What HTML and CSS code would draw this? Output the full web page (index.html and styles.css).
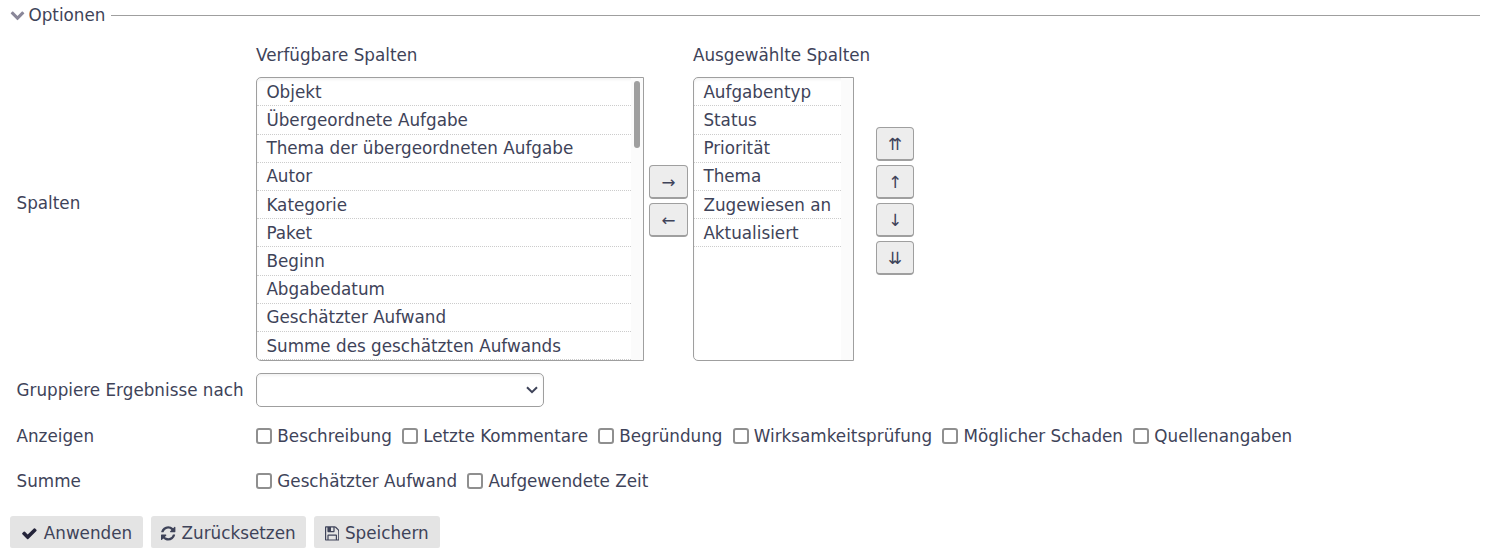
FILE: index.html
```html
<!DOCTYPE html>
<html lang="de">
<head>
<meta charset="utf-8">
<title>Optionen</title>
<link rel="stylesheet" href="styles.css">
</head>
<body>
<section class="options">
  <div class="legend">
    <svg class="chevron" viewBox="0 0 1792 1792"><path d="M1683 808l-742 741q-19 19-45 19t-45-19l-742-741q-19-19-19-45.500t19-45.500l166-165q19-19 45-19t45 19l531 531 531-531q19-19 45-19t45 19l166 165q19 19 19 45.500t-19 45.500z"/></svg>
    <span>Optionen</span>
    <span class="rule"></span>
  </div>
  <div class="row columns">
    <div class="label">Spalten</div>
    <div class="picker">
      <div class="available">
        <div class="caption">Verfügbare Spalten</div>
        <div class="list">
          <ul class="items">
            <li>Objekt</li><li>Übergeordnete Aufgabe</li><li>Thema der übergeordneten Aufgabe</li><li>Autor</li><li>Kategorie</li><li>Paket</li><li>Beginn</li><li>Abgabedatum</li><li>Geschätzter Aufwand</li><li>Summe des geschätzten Aufwands</li>
          </ul>
          <div class="track"><div class="thumb"></div></div>
        </div>
      </div>
      <div class="moves horizontal">
        <button type="button">→</button>
        <button type="button">←</button>
      </div>
      <div class="selected">
        <div class="caption">Ausgewählte Spalten</div>
        <div class="list">
          <ul class="items">
            <li>Aufgabentyp</li><li>Status</li><li>Priorität</li><li>Thema</li><li>Zugewiesen an</li><li>Aktualisiert</li>
          </ul>
          <div class="track"></div>
        </div>
      </div>
      <div class="moves vertical">
        <button type="button">⇈</button>
        <button type="button">↑</button>
        <button type="button">↓</button>
        <button type="button">⇊</button>
      </div>
    </div>
  </div>
  <div class="row group">
    <div class="label">Gruppiere Ergebnisse nach</div>
    <div class="select"><svg class="caret" viewBox="0 0 12 8"><path d="M1 1.200l5 5 5-5"/></svg></div>
  </div>
  <div class="row show">
    <div class="label">Anzeigen</div>
    <div class="checks">
      <label><input type="checkbox">Beschreibung</label>
      <label><input type="checkbox">Letzte Kommentare</label>
      <label><input type="checkbox">Begründung</label>
      <label><input type="checkbox">Wirksamkeitsprüfung</label>
      <label><input type="checkbox">Möglicher Schaden</label>
      <label><input type="checkbox">Quellenangaben</label>
    </div>
  </div>
  <div class="row totals">
    <div class="label">Summe</div>
    <div class="checks">
      <label><input type="checkbox">Geschätzter Aufwand</label>
      <label><input type="checkbox">Aufgewendete Zeit</label>
    </div>
  </div>
</section>
<div class="actions">
  <a class="action"><svg class="icon wide" viewBox="0 0 1792 1792"><path d="M1671 566q0 40-28 68l-724 724-136 136q-28 28-68 28t-68-28l-136-136-362-362q-28-28-28-68t28-68l136-136q28-28 68-28t68 28l294 295 656-657q28-28 68-28t68 28l136 136q28 28 28 68z"/></svg>Anwenden</a>
  <a class="action"><svg class="icon" viewBox="128 0 1536 1792"><path d="M1639 1056q0 5-1 7-64 268-268 434.500t-478 166.500q-146 0-282.500-55t-243.500-157l-129 129q-19 19-45 19t-45-19-19-45v-448q0-26 19-45t45-19h448q26 0 45 19t19 45-19 45l-137 137q71 66 161 102t187 36q134 0 250-65t186-179q11-17 53-117 8-23 30-23h192q13 0 22.500 9.500t9.500 22.500zm25-800v448q0 26-19 45t-45 19h-448q-26 0-45-19t-19-45 19-45l138-138q-148-137-349-137-134 0-250 65t-186 179q-11 17-53 117-8 23-30 23h-199q-13 0-22.500-9.500t-9.500-22.500v-7q65-268 270-434.500t480-166.500q146 0 284 55.500t245 156.500l130-129q19-19 45-19t45 19 19 45z"/></svg>Zurücksetzen</a>
  <a class="action save"><svg class="icon" viewBox="128 0 1536 1792"><path d="M512 1536h768v-384h-768v384zm896 0h128v-896q0-14-10-38.500t-20-34.500l-281-281q-10-10-34-20t-39-10v416q0 40-28 68t-68 28h-576q-40 0-68-28t-28-68v-416h-128v1280h128v-416q0-40 28-68t68-28h832q40 0 68 28t28 68v416zm-384-928v-320q0-13-9.500-22.500t-22.500-9.500h-192q-13 0-22.500 9.500t-9.500 22.500v320q0 13 9.500 22.500t22.500 9.500h192q13 0 22.500-9.500t9.500-22.500zm640 32v928q0 40-28 68t-68 28h-1344q-40 0-68-28t-28-68v-1344q0-40 28-68t68-28h928q40 0 88 20t76 48l280 280q28 28 48 76t20 88z"/></svg>Speichern</a>
</div>
</body>
</html>
```
FILE: styles.css
```css
* { box-sizing: border-box; }
body {
  margin: 0;
  padding: 0 28px 0 10px;
  height: 548px;
  overflow: hidden;
  background: #fff;
  color: #3e4359;
  font: 16.8px/28px "DejaVu Sans", sans-serif;
}
.legend { display: flex; align-items: center; height: 30px; }
.chevron { width: 15px; height: 15px; margin: 0 3.5px 1px 0; fill: #8a8799; }
.rule { flex: 1; height: 1px; margin-left: 6px; background: #9f9f9f; margin-top: 1px; }
.row { display: flex; align-items: center; padding-left: 6.5px; }
.label { width: 239.5px; flex: none; white-space: nowrap; }
.columns { height: 331px; align-items: stretch; }
.columns .label { padding-top: 159px; }
.picker { display: flex; align-items: flex-start; padding-top: 11px; }
.caption { height: 36px; white-space: nowrap; }
.list {
  display: flex;
  height: 284px;
  border: 1px solid #9f9f9f;
  border-radius: 5px 0 0 5px;
  overflow: hidden;
  box-shadow: inset 0 2px 3px rgba(0, 0, 0, .05);
}
.available .list { width: 388px; }
.selected { width: 161px; }
.items { flex: 1; margin: -.2px 0 0; padding: 0; list-style: none; }
.items li {
  height: 28.6px;
  margin-bottom: -.4px;
  padding-left: 9.4px;
  border-bottom: 1px dotted #ccc;
  line-height: 28px;
  white-space: nowrap;
}
.track { width: 12px; padding: 3px 3px 0; background: #fbfbfb; }
.thumb { width: 6px; height: 67px; border-radius: 3px; background: #9f9f9f; }
.moves { display: flex; flex-direction: column; gap: 4px; }
.horizontal { width: 39px; margin: 124px 5px 0; }
.vertical { width: 38px; margin: 86px 0 0 22px; }
.moves button {
  height: 34px;
  padding: 0;
  border: 1px solid #9f9f9f;
  border-bottom-width: 2px;
  border-radius: 4px;
  background: #ededed;
  color: #3e4359;
  font: 16.8px/28px "DejaVu Sans", sans-serif;
}
.group { height: 58px; }
.select {
  display: flex;
  align-items: center;
  justify-content: flex-end;
  width: 288px;
  height: 34px;
  padding-right: 5px;
  border: 1px solid #9f9f9f;
  border-radius: 5px;
  box-shadow: inset 0 2px 3px rgba(0, 0, 0, .05);
}
.caret { width: 12px; height: 8px; fill: none; stroke: #3e4359; stroke-width: 2; }
.show { height: 34px; }
.totals { height: 56px; }
.checks { display: flex; gap: 10px; }
.checks label { display: flex; align-items: center; white-space: nowrap; }
.checks input {
  appearance: none;
  width: 16px;
  height: 16px;
  margin: 0 5.3px 0 0;
  border: 2px solid #8f8f8f;
  border-radius: 3px;
  background: #fff;
}
.actions { display: flex; gap: 8px; padding-top: 7px; }
.action {
  display: flex;
  align-items: center;
  height: 32px;
  padding: 2px 10.7px 0 10.4px;
  border-radius: 3px 3px 2px 2px;
  background: #e4e4e4;
  white-space: nowrap;
}
.save { padding-right: 11.4px; }
.icon { width: 14.4px; height: 16.8px; margin-right: 5.9px; fill: #3e4359; }
.wide { width: 16.8px; margin: 0 5.8px 0 .8px; fill: #24243a; }
```
